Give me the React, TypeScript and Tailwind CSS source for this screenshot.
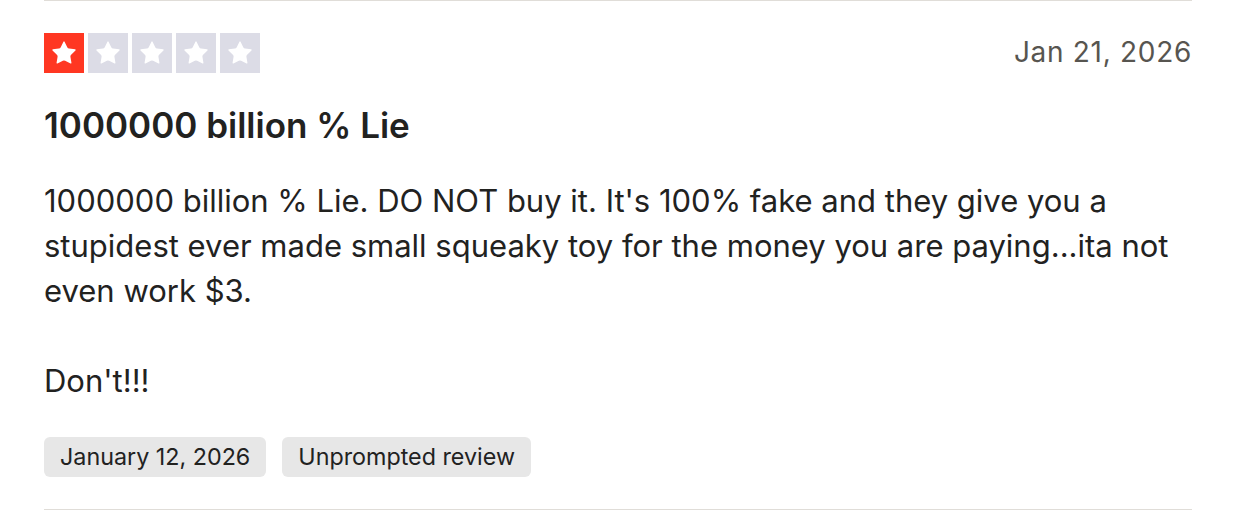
import { Star } from 'lucide-react'

function Stars({ rating }: { rating: number }) {
  return (
    <div className="flex gap-1">
      {Array.from({ length: 5 }).map((_, i) => (
        <div
          key={i}
          className={`w-10 h-10 flex items-center justify-center ${i < rating ? 'bg-[#ff3722]' : 'bg-[#dcdce6]'}`}
        >
          <Star size={28} fill="white" stroke="white" strokeWidth={0} />
        </div>
      ))}
    </div>
  )
}

export default function App() {
  return (
    <div className="bg-white w-[1238px] h-[510px] px-11 font-['Inter',sans-serif] text-[#22221f]">
      <div className="border-t border-b border-[#e0ddd8] h-[510px] w-[1148px] pt-8">
        <div className="flex justify-between items-center">
          <Stars rating={1} />
          <span className="text-[28px] text-[#575550] tracking-wide -mt-0.5">Jan 21, 2026</span>
        </div>
        <h2 className="text-[35px] font-semibold mt-[30px] leading-[44px]">1000000 billion % Lie</h2>
        <p className="text-[31px] leading-[45px] mt-[31px] whitespace-pre-line">
          1000000 billion % Lie. DO NOT buy it. It's 100% fake and they give you a stupidest ever made small squeaky
          toy for the money you are paying...ita not even work $3.
          {'\n\n'}Don't!!!
        </p>
        <div className="flex gap-4 mt-[34px]">
          <span className="h-10 px-4 flex items-center rounded-md bg-[#e7e7e7] text-[23.3px]">January 12, 2026</span>
          <span className="h-10 px-4 flex items-center rounded-md bg-[#e7e7e7] text-[23.3px]">Unprompted review</span>
        </div>
      </div>
    </div>
  )
}
